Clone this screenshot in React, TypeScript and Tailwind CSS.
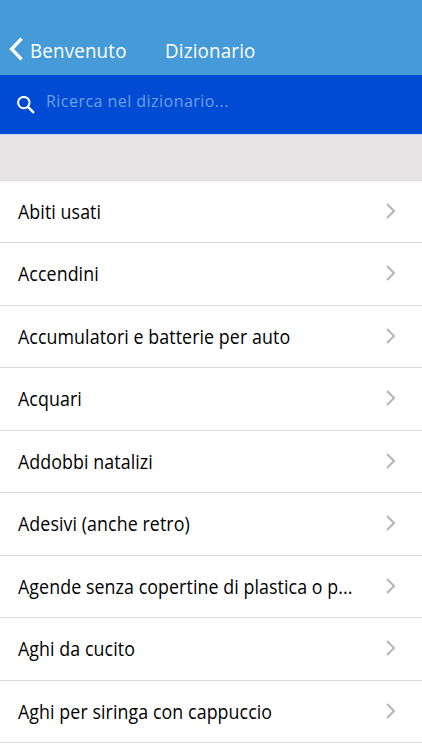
import { useState } from 'react';

const items = [
  'Abiti usati',
  'Accendini',
  'Accumulatori e batterie per auto',
  'Acquari',
  'Addobbi natalizi',
  'Adesivi (anche retro)',
  'Agende senza copertine di plastica o p...',
  'Aghi da cucito',
  'Aghi per siringa con cappuccio',
];

function Header() {
  return (
    <header className="h-[75px] shrink-0 bg-[#449bd7] pt-[25px] flex items-center text-white text-[20.6px] tracking-[0.2px]">
      <button className="flex items-center w-[165px] pl-[9px] tracking-[0.2px]">
        <svg className="w-[14px] h-[24px] mr-[6.5px] mb-[2px]" viewBox="0 0 14 24" fill="none" stroke="currentColor" strokeWidth="3.4">
          <path d="M12.6 1.6 2.6 12l10 10.4" />
        </svg>
        <span className="origin-left scale-x-[0.91]">Benvenuto</span>
      </button>
      <h1 className="origin-left scale-x-[0.91]">Dizionario</h1>
    </header>
  );
}

function SearchBar() {
  const [query, setQuery] = useState('');
  return (
    <div className="h-[59px] shrink-0 bg-[#004bd3] flex items-center pl-[17px] text-white">
      <svg className="w-[18px] h-[18px] mr-[11px] mt-px" viewBox="0 0 18 18" fill="none" stroke="currentColor" strokeWidth="2">
        <circle cx="6.8" cy="6.6" r="5.7" />
        <path d="m11.2 11.2 5.7 5.7" strokeWidth="2.5" />
      </svg>
      <input
        value={query}
        onChange={(e) => setQuery(e.target.value)}
        placeholder="Ricerca nel dizionario..."
        className="flex-1 min-w-0 bg-transparent text-[17px] tracking-[0.5px] origin-left scale-x-[0.94] outline-none placeholder:text-[#709fe8] mb-[7px]"
      />
    </div>
  );
}

export default function App() {
  return (
    <div className="w-full h-[750px] overflow-hidden bg-white flex flex-col font-['Open_Sans','Noto_Sans',sans-serif]">
      <Header />
      <SearchBar />
      <div className="h-[45.5px] shrink-0 bg-[#e5e3e4] border-t border-[#c9d4ee]" />
      <ul className="border-t border-[#d9d9d9]">
        {items.map((item) => (
          <li key={item} className="h-[62.5px] border-b border-[#d9d9d9] flex items-center pl-[18px] pr-[26px]">
            <span className="mt-[1.5px] whitespace-nowrap text-[19.3px] tracking-[0.08px] origin-left scale-x-[0.924] text-black">{item}</span>
            <svg className="w-[11px] h-[16px] ml-auto mb-px text-[#b5b5b5]" viewBox="0 0 11 16" fill="none" stroke="currentColor" strokeWidth="2">
              <path d="m2 1 7 7-7 7" />
            </svg>
          </li>
        ))}
      </ul>
    </div>
  );
}
